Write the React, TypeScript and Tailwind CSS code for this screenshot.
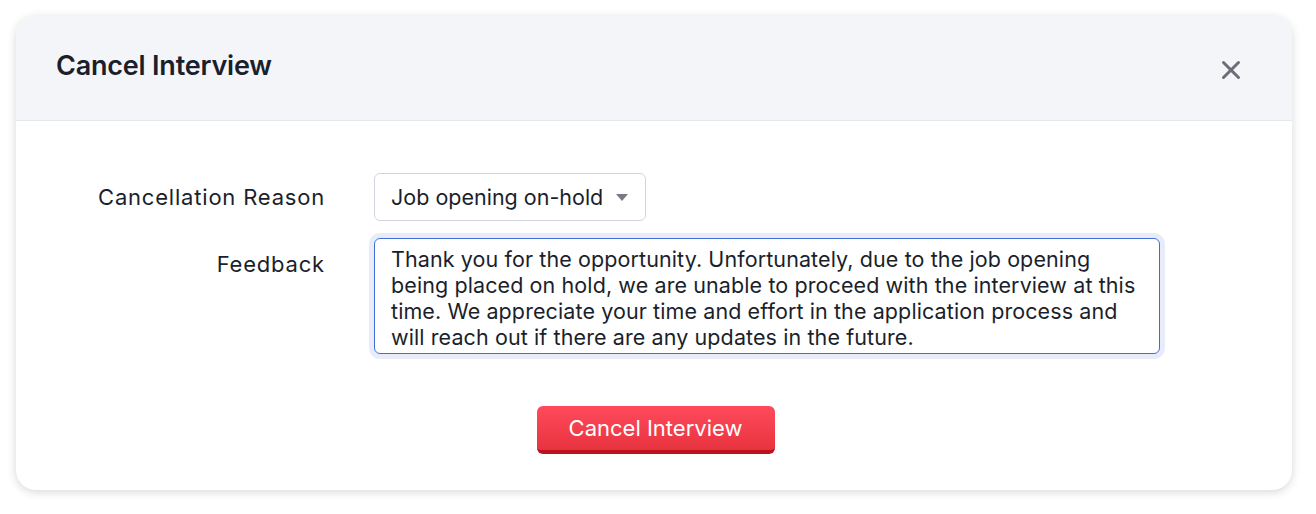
import { X } from "lucide-react";

const feedbackLines = [
  "Thank you for the opportunity. Unfortunately, due to the job opening",
  "being placed on hold, we are unable to proceed with the interview at this",
  "time. We appreciate your time and effort in the application process and",
  "will reach out if there are any updates in the future.",
];

export default function App() {
  return (
    <div className="min-h-[514px] w-[1316px] bg-white p-4 font-['Inter',sans-serif] text-[#1b1f2b]">
      <div className="flex h-[474px] w-[1276px] flex-col overflow-hidden rounded-[20px] bg-white shadow-[0_2px_10px_rgba(0,0,0,0.16)]">
        <div className="flex h-[105px] shrink-0 items-center justify-between border-b border-[#e6e8ee] bg-[#f4f5f9] pl-10 pr-[46px]">
          <h1 className="-mt-[4px] text-[27px] font-semibold tracking-[-0.2px] text-[#1b1f2b]">Cancel Interview</h1>
          <X className="mt-[4px] size-[30px] text-[#6b6e78]" strokeWidth={2.4} />
        </div>

        <div className="flex flex-col pt-[52px]">
          <div className="grid grid-cols-[309px_1fr] items-start gap-x-[49px] gap-y-[17px]">
            <label className="flex h-12 items-center justify-end text-[22px] tracking-[0.8px]">Cancellation Reason</label>
            <div className="flex h-12 w-[272px] items-center justify-between rounded-[6px] border border-[#d2d5dd] bg-white pl-4 pr-[17px] text-[21.5px]">
              <span>Job opening on-hold</span>
              <svg width="12" height="7" viewBox="0 0 12 7" className="mt-[1px] shrink-0">
                <path d="M0 0h12L6 7z" fill="#777a84" />
              </svg>
            </div>

            <label className="mt-[10px] text-right text-[22px] tracking-[0.8px]">Feedback</label>
            <div className="w-[786px] whitespace-nowrap rounded-[6px] border border-[#3f6fd6] px-4 pb-[3px] pt-[7px] text-[21.5px] leading-[26px] tracking-[0.1px] shadow-[0_0_0_5px_#e8ecf8]">
              {feedbackLines.map((line) => (
                <div key={line}>{line}</div>
              ))}
            </div>
          </div>

          <div className="mt-[52px] flex justify-center pl-[3px]">
            <button className="h-12 w-[238px] rounded-[6px] border-b-[4px] border-[#b8131f] bg-gradient-to-b from-[#ff4a5c] to-[#e8323f] text-[22px] text-white">
              Cancel Interview
            </button>
          </div>
        </div>
      </div>
    </div>
  );
}
